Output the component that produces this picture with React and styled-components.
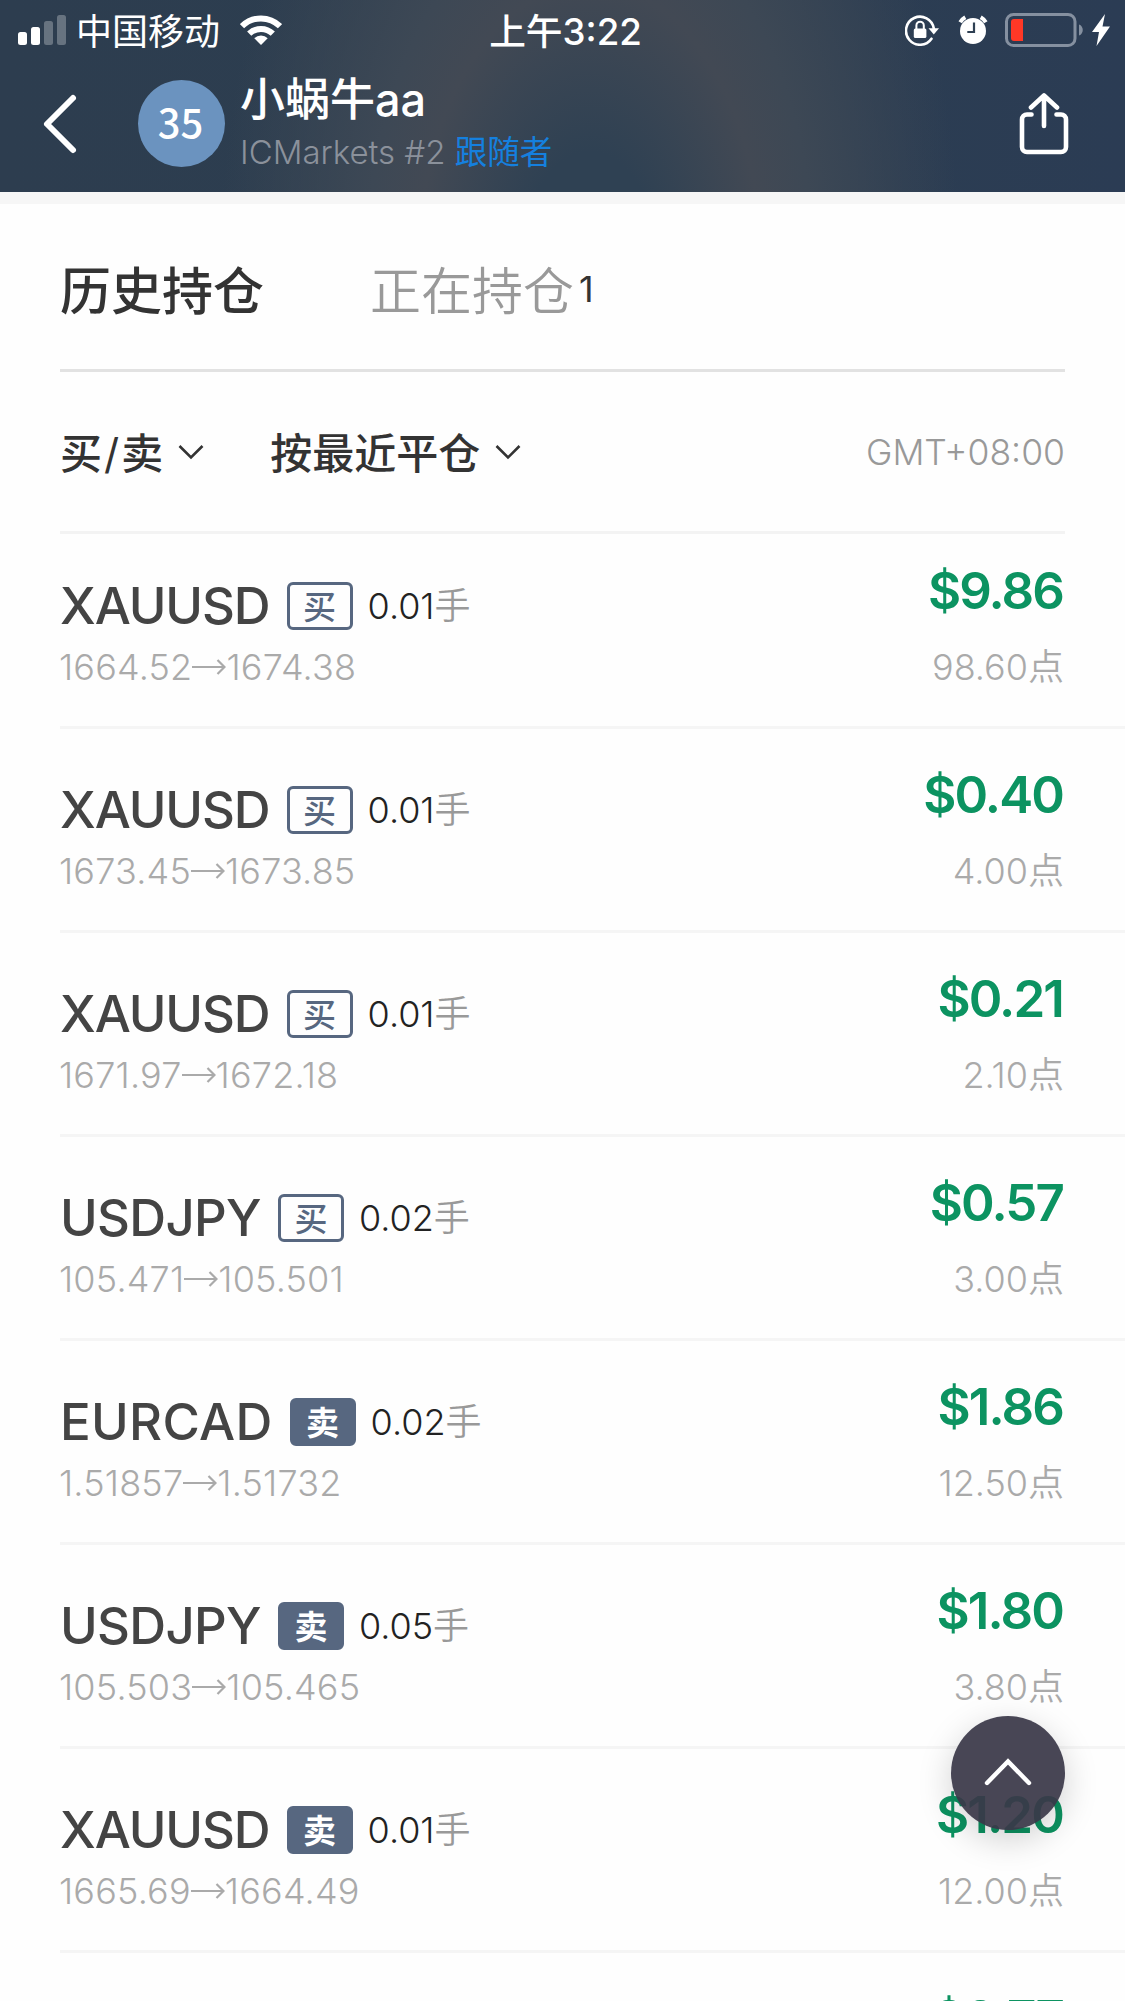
import styled, { createGlobalStyle } from "styled-components";

const trades = [
    { symbol: "XAUUSD", side: "buy", volume: "0.01", open: "1664.52", close: "1674.38", profit: "$9.86", points: "98.60" },
    { symbol: "XAUUSD", side: "buy", volume: "0.01", open: "1673.45", close: "1673.85", profit: "$0.40", points: "4.00" },
    { symbol: "XAUUSD", side: "buy", volume: "0.01", open: "1671.97", close: "1672.18", profit: "$0.21", points: "2.10" },
    { symbol: "USDJPY", side: "buy", volume: "0.02", open: "105.471", close: "105.501", profit: "$0.57", points: "3.00" },
    { symbol: "EURCAD", side: "sell", volume: "0.02", open: "1.51857", close: "1.51732", profit: "$1.86", points: "12.50" },
    { symbol: "USDJPY", side: "sell", volume: "0.05", open: "105.503", close: "105.465", profit: "$1.80", points: "3.80" },
    { symbol: "XAUUSD", side: "sell", volume: "0.01", open: "1665.69", close: "1664.49", profit: "$1.20", points: "12.00" },
    { profit: "$0.77" },
];

const tracking = { XAUUSD: "-1.1px", USDJPY: "-0.7px", EURCAD: "0.3px" };

export default function App() {
    return (
        <PageStl>
            <GlobalStl />
            <HeaderStl>
                <StatusBar />
                <ProfileBar />
            </HeaderStl>
            <BandStl />
            <TabsStl>
                <TabStl $active>历史持仓</TabStl>
                <TabStl>正在持仓</TabStl>
                <TabCountStl>1</TabCountStl>
            </TabsStl>
            <FiltersStl>
                <FilterStl>
                    <span>
                        买<SlashStl>/</SlashStl>卖
                    </span>
                    <ArrowDown />
                </FilterStl>
                <FilterStl>
                    <span>按最近平仓</span>
                    <ArrowDown />
                </FilterStl>
                <ZoneStl>GMT+08:00</ZoneStl>
            </FiltersStl>
            <ListStl>
                {trades.map((trade, i) => (
                    <Trade key={i} {...trade} />
                ))}
            </ListStl>
            <TopButtonStl aria-label="回到顶部">
                <svg width="50" height="30" viewBox="0 0 50 30" fill="none" stroke="#fff" strokeWidth="4.400" strokeLinecap="round">
                    <path d="M4 26 25 4.500 46 26" />
                </svg>
            </TopButtonStl>
        </PageStl>
    );
}

function StatusBar() {
    return (
        <StatusStl>
            <StatusSideStl>
                <svg width="48" height="30" viewBox="0 0 48 30" fill="#fff">
                    <rect x="0" y="17" width="9" height="13" rx="2.500" />
                    <rect x="13" y="12" width="9" height="18" rx="2.500" />
                    <rect x="26" y="6" width="9" height="24" rx="2.500" opacity=".28" />
                    <rect x="39" y="0" width="9" height="30" rx="2.500" opacity=".28" />
                </svg>
                <CarrierStl>中国移动</CarrierStl>
                <svg width="42" height="30" viewBox="0 0 42 30" fill="none" stroke="#fff" strokeWidth="6">
                    <path d="M2 11.200a27 27 0 0 1 38 0" />
                    <path d="M9.200 18.700a17 17 0 0 1 23.600 0" />
                    <path d="M21 30 14.300 23.300a9.500 9.500 0 0 1 13.400 0Z" fill="#fff" stroke="none" />
                </svg>
            </StatusSideStl>
            <TimeStl>上午3:22</TimeStl>
            <StatusSideStl $end>
                <svg width="34" height="32" viewBox="0 0 34 32" fill="none">
                    <path d="M26.500 24.700A14 14 0 1 1 28.800 14.500" stroke="#fff" strokeWidth="2.600" strokeLinecap="round" />
                    <path d="M23.500 14.200h10.500l-5.200 6.300z" fill="#fff" />
                    <rect x="8.800" y="14.500" width="12.600" height="9.500" rx="1.500" fill="#fff" />
                    <path d="M11.400 15v-3.600a3.700 3.700 0 0 1 7.400 0V15" stroke="#fff" strokeWidth="2" />
                </svg>
                <AlarmStl width="30" height="30" viewBox="0 0 30 30" fill="none">
                    <circle cx="15" cy="16" r="13" fill="#fff" />
                    <path d="M2.200 7.200A14 14 0 0 1 7.300 2.200M27.800 7.200A14 14 0 0 0 22.700 2.200" stroke="#fff" strokeWidth="4" />
                    <path d="M16 7.500v9.500H9.300" stroke="#2f4053" strokeWidth="2.200" />
                </AlarmStl>
                <svg width="79" height="34" viewBox="0 0 79 34" fill="none">
                    <rect x="1.500" y="1.500" width="68.500" height="31" rx="7" stroke="#8590a0" strokeWidth="3" />
                    <path d="M74 11.500c5 1.500 5 9.500 0 11z" fill="#8590a0" />
                    <path d="M9 6h9v22H9a3 3 0 0 1-3-3V9a3 3 0 0 1 3-3z" fill="#ff3826" />
                </svg>
                <BoltStl width="18" height="32" viewBox="0 0 18 32" fill="#fff">
                    <path d="M13 0 0 18h7L4.500 32 18 12.500h-7.500z" />
                </BoltStl>
            </StatusSideStl>
        </StatusStl>
    );
}

function ProfileBar() {
    return (
        <ProfileStl>
            <svg width="36" height="62" viewBox="0 0 36 62" fill="none" stroke="#fff" strokeWidth="6" strokeLinecap="round" strokeLinejoin="round">
                <path d="M31 5 5 31l26 26" />
            </svg>
            <AvatarStl>35</AvatarStl>
            <ProfileTextStl>
                <NameStl>小蜗牛aa</NameStl>
                <BrokerStl>
                    ICMarkets #2 <FollowerStl>跟随者</FollowerStl>
                </BrokerStl>
            </ProfileTextStl>
            <svg width="50" height="62" viewBox="0 0 50 62" fill="none" stroke="#fff" strokeWidth="4.600" strokeLinecap="round" strokeLinejoin="round">
                <path d="M12.500 21.500H8a5 5 0 0 0-5 5V54a5 5 0 0 0 5 5h34a5 5 0 0 0 5-5V26.500a5 5 0 0 0-5-5h-4.500" />
                <path d="M25 33V3.500M12 14.500l13-12 13 12" />
            </svg>
        </ProfileStl>
    );
}

function ArrowDown() {
    return (
        <svg width="26" height="16" viewBox="0 0 26 16" fill="none" stroke="#333" strokeWidth="2.600">
            <path d="M1.500 2 13 13.500 24.500 2" />
        </svg>
    );
}

function Trade({ symbol, side, volume, open, close, profit, points }) {
    return (
        <TradeStl>
            {symbol && (
                <div>
                    <TradeTitleStl>
                        <SymbolStl $tracking={tracking[symbol]}>{symbol}</SymbolStl>
                        <SideStl $sell={side === "sell"}>{side === "sell" ? "卖" : "买"}</SideStl>
                        <VolumeStl>
                            {volume}
                            <span>手</span>
                        </VolumeStl>
                    </TradeTitleStl>
                    <PricesStl>
                        {open}
                        <svg width="34" height="16" viewBox="0 0 34 16" fill="none" stroke="#aaa" strokeWidth="2.200">
                            <path d="M0 8h32.500M25.500 1l7 7-7 7" />
                        </svg>
                        {close}
                    </PricesStl>
                </div>
            )}
            <ResultStl>
                <ProfitStl>{profit}</ProfitStl>
                {points && <PointsStl>{points}点</PointsStl>}
            </ResultStl>
        </TradeStl>
    );
}

const GlobalStl = createGlobalStyle`
    * {
        box-sizing: border-box;
    }
    body {
        margin: 0;
        background: #fff;
        font-family: Inter, "Noto Sans CJK SC", sans-serif;
    }
    svg {
        display: block;
        flex-shrink: 0;
    }
`;

const PageStl = styled.div`
    width: 1125px;
    height: 2001px;
    overflow: hidden;
    display: flex;
    flex-direction: column;
    background: #fefefe;
`;

const HeaderStl = styled.header`
    height: 192px;
    flex-shrink: 0;
    color: #fff;
    background:
        radial-gradient(ellipse 370px 600px at 590px 260px, #2f4153 18%, #424954 46%, #3d4855 60%, transparent 100%),
        linear-gradient(90deg, #2d3d4f, #2c3e50 50%, #2b3c54);
`;

const StatusStl = styled.div`
    height: 60px;
    padding: 0 15px 0 18px;
    display: grid;
    grid-template-columns: 1fr auto 1fr;
    align-items: center;
`;

const StatusSideStl = styled.div`
    display: flex;
    align-items: center;
    justify-content: ${(props) => (props.$end ? "flex-end" : "flex-start")};
`;

const CarrierStl = styled.span`
    font-size: 36px;
    line-height: 60px;
    padding-top: 3px;
    margin: -3px 20px 0 10px;
    height: 60px;
`;

const TimeStl = styled.span`
    height: 60px;
    padding-left: 3px;
    font-size: 36.7px;
    font-weight: 500;
    line-height: 63px;
`;

const AlarmStl = styled.svg`
    margin: 0 17px 0 19px;
`;

const BoltStl = styled.svg`
    margin-left: 8px;
`;

const ProfileStl = styled.div`
    height: 127px;
    padding: 0 56px 0 42px;
    display: flex;
    align-items: center;
`;

const AvatarStl = styled.div`
    width: 87px;
    height: 87px;
    margin: 0 15px 0 60px;
    border-radius: 50%;
    background: #6b93bf;
    font: 500 40px/83px "Noto Sans CJK SC", sans-serif;
    text-align: center;
    text-indent: -2px;
`;

const ProfileTextStl = styled.div`
    flex: 1;
    padding-top: 6px;
`;

const NameStl = styled.div`
    font-size: 45px;
    font-weight: 500;
    line-height: 52px;
`;

const BrokerStl = styled.div`
    font-size: 33px;
    font-weight: 350;
    line-height: 52px;
    color: #8b919b;
`;

const FollowerStl = styled.span`
    color: #1580df;
    font-size: 32.5px;
    font-weight: 400;
`;

const BandStl = styled.div`
    height: 12px;
    flex-shrink: 0;
    background: #f6f6f6;
`;

const TabsStl = styled.nav`
    height: 168px;
    flex-shrink: 0;
    margin: 0 60px;
    padding-top: 2px;
    display: flex;
    align-items: center;
    border-bottom: 3px solid #e2e2e2;
`;

const TabStl = styled.span`
    font-size: 51px;
    font-weight: ${(props) => (props.$active ? 500 : 350)};
    color: ${(props) => (props.$active ? "#333" : "#999")};
    margin-right: ${(props) => (props.$active ? "106px" : "5px")};
`;

const TabCountStl = styled.span`
    padding-top: 3px;
    font-size: 36px;
    color: #333;
`;

const FiltersStl = styled.div`
    height: 162px;
    flex-shrink: 0;
    margin: 0 60px;
    display: flex;
    align-items: center;
    border-bottom: 3px solid #f3f3f3;
`;

const FilterStl = styled.div`
    display: flex;
    align-items: center;
    gap: 15px;
    margin-right: 66px;
    font-size: 42px;
    font-weight: 500;
    color: #333;
    span {
        margin-top: -3px;
    }
`;

const SlashStl = styled.span`
    margin: 0 2px;
    font-weight: 400;
`;

const ZoneStl = styled.span`
    margin-left: auto;
    padding-top: 2px;
    font-size: 35.5px;
    font-weight: 350;
    color: #999;
`;

const ListStl = styled.div`
    margin-left: 60px;
    margin-top: -9px;
`;

const TradeStl = styled.div`
    height: 204px;
    padding: 39px 60px 0 0;
    display: flex;
    justify-content: space-between;
    border-bottom: 3px solid #f5f5f5;
    &:last-child {
        justify-content: flex-end;
    }
`;

const TradeTitleStl = styled.div`
    height: 82px;
    display: flex;
    align-items: center;
`;

const SymbolStl = styled.span`
    font-size: 51px;
    font-weight: 450;
    letter-spacing: ${(props) => props.$tracking};
    color: #444;
`;

const SideStl = styled.span`
    width: 66px;
    height: 48px;
    margin: 1px 15px 0 17px;
    border: 3px solid #576780;
    border-radius: 6px;
    background: ${(props) => (props.$sell ? "#576780" : "transparent")};
    color: ${(props) => (props.$sell ? "#fff" : "#576780")};
    font: ${(props) => (props.$sell ? 700 : 500)} 33px/40px "Noto Sans CJK SC", sans-serif;
    text-align: center;
`;

const VolumeStl = styled.span`
    margin-top: -4px;
    font-size: 36px;
    font-weight: 350;
    color: #222;
    span {
        color: #999;
    }
`;

const PricesStl = styled.div`
    height: 42px;
    margin-left: -1px;
    display: flex;
    align-items: center;
    font-size: 36px;
    font-weight: 350;
    letter-spacing: 0.2px;
    color: #aaa;
`;

const ResultStl = styled.div`
    text-align: right;
`;

const ProfitStl = styled.div`
    height: 68px;
    margin-right: 2px;
    font-size: 51px;
    font-weight: 600;
    line-height: 53px;
    letter-spacing: -1.9px;
    color: #0c9361;
`;

const PointsStl = styled.div`
    margin-right: 1px;
    font-size: 36px;
    font-weight: 350;
    line-height: 71px;
    color: #aaa;
`;

const TopButtonStl = styled.button`
    position: absolute;
    left: 951px;
    top: 1716px;
    width: 114px;
    height: 114px;
    padding-bottom: 4px;
    display: flex;
    align-items: center;
    justify-content: center;
    border: 0;
    border-radius: 50%;
    background: rgba(58, 56, 72, 0.93);
    box-shadow: 0 10px 34px rgba(0, 0, 0, 0.18);
`;
